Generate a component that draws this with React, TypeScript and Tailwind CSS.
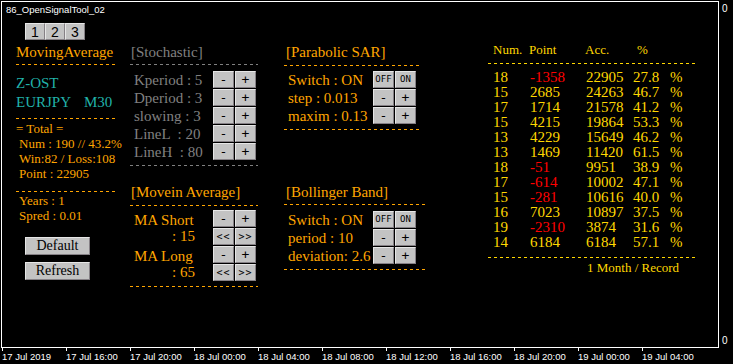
import React from "react";

// rows of the 1-month record table: num, point, acc, percent
const RECORDS: [string, string, string, string][] = [
  ["18", "-1358", "22905", "27.8"],
  ["15", "2685", "24263", "46.7"],
  ["17", "1714", "21578", "41.2"],
  ["15", "4215", "19864", "53.3"],
  ["13", "4229", "15649", "46.2"],
  ["13", "1469", "11420", "61.5"],
  ["18", "-51", "9951", "38.9"],
  ["17", "-614", "10002", "47.1"],
  ["15", "-281", "10616", "40.0"],
  ["16", "7023", "10897", "37.5"],
  ["19", "-2310", "3874", "31.6"],
  ["14", "6184", "6184", "57.1"],
];

const AXIS = [
  "17 Jul 2019",
  "17 Jul 16:00",
  "17 Jul 20:00",
  "18 Jul 00:00",
  "18 Jul 04:00",
  "18 Jul 08:00",
  "18 Jul 12:00",
  "18 Jul 16:00",
  "18 Jul 20:00",
  "19 Jul 00:00",
  "19 Jul 04:00",
];

const Dash: React.FC<{ className: string }> = ({ className }) => (
  <div className={`h-px shrink-0 ${className}`} />
);

const ORANGE_DASH =
  "bg-[repeating-linear-gradient(90deg,#ffa500_0px,#ffa500_3px,transparent_3px,transparent_6px)]";
const GRAY_DASH =
  "bg-[repeating-linear-gradient(90deg,#808080_0px,#808080_3px,transparent_3px,transparent_6px)]";
const GOLD_DASH =
  "bg-[repeating-linear-gradient(90deg,#ffd700_0px,#ffd700_3px,transparent_3px,transparent_6px)]";

const Btn: React.FC<{ label: string; size?: "sm" | "md" }> = ({ label, size }) => (
  <div
    className={`w-[21px] h-[17px] flex items-center justify-center bg-[#c3c3c3] border border-t-[#e6e6e6] border-l-[#e6e6e6] border-r-[#858085] border-b-[#858085] text-black font-['DejaVu_Sans_Mono',monospace] leading-none ${
      size === "sm" ? "text-[9px]" : size === "md" ? "text-[10px] tracking-[1px]" : "text-[13px]"
    }`}
  >
    {label}
  </div>
);

const BtnPair: React.FC<{ a: string; b: string; size?: "sm" | "md" }> = ({ a, b, size }) => (
  <div className="flex gap-px">
    <Btn label={a} size={size} />
    <Btn label={b} size={size} />
  </div>
);

const ParamRow: React.FC<{
  text: string;
  textWidth: string;
  a: string;
  b: string;
  color: string;
  size?: "sm" | "md";
}> = ({ text, textWidth, a, b, color, size }) => (
  <div className="flex h-[18px]">
    <div className={`${textWidth} ${color} pl-[4px] text-[15px] leading-[18px] whitespace-pre`}>
      {text}
    </div>
    <BtnPair a={a} b={b} size={size} />
  </div>
);

const App: React.FC = () => {
  return (
    <div className="w-[733px] h-[364px] bg-black overflow-hidden select-none font-['Liberation_Serif',serif]">
      <div className="flex pt-[1px] pl-[1px]">
        {/* chart window */}
        <div className="w-[718px] h-[347px] border border-white flex flex-col">
          <div className="mt-[2px] pl-[4px] h-[12px] text-[9.5px] leading-[12px] text-white font-['Liberation_Sans',sans-serif]">
            86_OpenSignalTool_02
          </div>

          {/* tabs */}
          <div className="mt-[7px] ml-[23px] flex h-[17px]">
            {["1", "2", "3"].map((t) => (
              <div
                key={t}
                className="w-[20px] h-[17px] flex items-center justify-center bg-[#c3c3c3] border border-t-[#e6e6e6] border-l-[#e6e6e6] border-r-[#858085] border-b-[#858085] text-black text-[14px] leading-none font-['Liberation_Sans',sans-serif]"
              >
                {t}
              </div>
            ))}
          </div>

          <div className="mt-[2px] flex">
            {/* left summary */}
            <div className="ml-[14px] w-[114px] pt-[1px] flex flex-col text-[#ffa500]">
              <div className="text-[15px] leading-[18px]">MovingAverage</div>
              <Dash className={`mt-[3px] w-[100px] ${ORANGE_DASH}`} />
              <div className="mt-[9px] text-[15px] leading-[18px] text-[#20b2aa]">Z-OST</div>
              <div className="mt-[1px] text-[15px] leading-[18px] text-[#20b2aa]">
                EURJPY<span className="ml-[13px]">M30</span>
              </div>
              <Dash className={`mt-[7px] w-[100px] ${ORANGE_DASH}`} />
              <div className="mt-[2px] text-[13px] leading-[15px]">= Total =</div>
              <div className="pl-[3px] text-[13px] leading-[15px]">Num : 190 // 43.2%</div>
              <div className="pl-[3px] text-[13px] leading-[15px]">Win:82 / Loss:108</div>
              <div className="pl-[3px] text-[13px] leading-[15px]">Point : 22905</div>
              <Dash className={`mt-[10px] w-[100px] ${ORANGE_DASH}`} />
              <div className="mt-[1px] pl-[3px] text-[13px] leading-[15px]">Years : 1</div>
              <div className="pl-[3px] text-[13px] leading-[15px]">Spred : 0.01</div>
              <div className="mt-[14px] ml-[9px] w-[65px] h-[18px] flex items-center justify-center bg-[#c3c3c3] border border-t-[#e6e6e6] border-l-[#e6e6e6] border-r-[#858085] border-b-[#858085] text-black text-[14px] leading-none">
                Default
              </div>
              <div className="mt-[7px] ml-[9px] w-[65px] h-[18px] flex items-center justify-center bg-[#c3c3c3] border border-t-[#e6e6e6] border-l-[#e6e6e6] border-r-[#858085] border-b-[#858085] text-black text-[14px] leading-none">
                Refresh
              </div>
            </div>

            {/* stochastic + moving average */}
            <div className="w-[128px] pt-[1px] flex flex-col">
              <div className="pl-[1px] text-[15px] leading-[18px] text-[#808080]">[Stochastic]</div>
              <Dash className={`mt-[3px] w-[128px] ${GRAY_DASH}`} />
              <div className="mt-[6px] flex flex-col">
                <ParamRow text="Kperiod : 5" textWidth="w-[83px]" a="-" b="+" color="text-[#808080]" />
                <ParamRow text="Dperiod : 3" textWidth="w-[83px]" a="-" b="+" color="text-[#808080]" />
                <ParamRow text="slowing : 3" textWidth="w-[83px]" a="-" b="+" color="text-[#808080]" />
                <ParamRow text="LineL  : 20" textWidth="w-[83px]" a="-" b="+" color="text-[#808080]" />
                <ParamRow text="LineH  : 80" textWidth="w-[83px]" a="-" b="+" color="text-[#808080]" />
              </div>
              <Dash className={`mt-[4px] w-[128px] ${GRAY_DASH}`} />

              <div className="mt-[17px] pl-[1px] text-[15px] leading-[18px] text-[#ffa500]">
                [Movein Average]
              </div>
              <Dash className={`mt-[4px] w-[128px] ${ORANGE_DASH}`} />
              <div className="mt-[4px] flex">
                <div className="w-[83px] pl-[4px] pt-[2px] text-[15px] leading-[16px] text-[#ffa500]">
                  <div className="w-[61px]">
                    <div>MA Short</div>
                    <div className="text-right">: 15</div>
                    <div className="mt-[4px]">MA Long</div>
                    <div className="text-right">: 65</div>
                  </div>
                </div>
                <div className="flex flex-col gap-px">
                  <BtnPair a="-" b="+" />
                  <BtnPair a="<<" b=">>" size="md" />
                  <BtnPair a="-" b="+" />
                  <BtnPair a="<<" b=">>" size="md" />
                </div>
              </div>
              <Dash className={`mt-[5px] w-[128px] ${ORANGE_DASH}`} />
            </div>

            {/* parabolic sar + bollinger */}
            <div className="ml-[26px] w-[142px] pt-[1px] flex flex-col text-[#ffa500]">
              <div className="pl-[2px] text-[15px] leading-[18px]">[Parabolic SAR]</div>
              <Dash className={`mt-[4px] w-[136px] ${ORANGE_DASH}`} />
              <div className="mt-[5px] flex flex-col">
                <ParamRow text="Switch : ON" textWidth="w-[89px]" a="OFF" b="ON" size="sm" color="text-[#ffa500]" />
                <ParamRow text="step : 0.013" textWidth="w-[89px]" a="-" b="+" color="text-[#ffa500]" />
                <ParamRow text="maxim : 0.13" textWidth="w-[89px]" a="-" b="+" color="text-[#ffa500]" />
              </div>
              <Dash className={`mt-[4px] w-[136px] ${ORANGE_DASH}`} />

              <div className="mt-[53px] pl-[2px] text-[15px] leading-[18px]">[Bollinger Band]</div>
              <Dash className={`mt-[3px] w-[142px] ${ORANGE_DASH}`} />
              <div className="mt-[6px] flex flex-col">
                <ParamRow text="Switch : ON" textWidth="w-[89px]" a="OFF" b="ON" size="sm" color="text-[#ffa500]" />
                <ParamRow text="period : 10" textWidth="w-[89px]" a="-" b="+" color="text-[#ffa500]" />
                <ParamRow text="deviation: 2.6" textWidth="w-[89px]" a="-" b="+" color="text-[#ffa500]" />
              </div>
              <Dash className={`mt-[4px] w-[142px] ${ORANGE_DASH}`} />
            </div>

            {/* record table */}
            <div className="ml-[62px] w-[207px] flex flex-col text-[#ffd700]">
              <div className="flex pl-[5px] text-[13px] leading-[15px]">
                <span className="w-[36px]">Num.</span>
                <span className="w-[56px]">Point</span>
                <span className="w-[52px]">Acc.</span>
                <span>%</span>
              </div>
              <Dash className={`mt-[6px] w-[207px] ${GOLD_DASH}`} />
              <div className="mt-[6px] flex flex-col text-[15px] leading-[15px]">
                {RECORDS.map(([num, point, acc, pct], i) => (
                  <div key={i} className="flex pl-[5px] h-[15px]">
                    <span className="w-[37px]">{num}</span>
                    <span className={`w-[56px] ${point.startsWith("-") ? "text-[#ff0000]" : ""}`}>
                      {point}
                    </span>
                    <span className="w-[47px]">{acc}</span>
                    <span className="w-[37px]">{pct}</span>
                    <span>%</span>
                  </div>
                ))}
              </div>
              <Dash className={`mt-[7px] w-[207px] ${GOLD_DASH}`} />
              <div className="mt-[2px] pl-[99px] text-[13px] leading-[15px] whitespace-nowrap">
                1 Month / Record
              </div>
            </div>
          </div>
        </div>

        {/* price scale */}
        <div className="h-[347px] pl-[3px] pt-[2px] pb-[2px] flex flex-col justify-between text-white text-[10px] leading-[11px] font-['Liberation_Sans',sans-serif]">
          <span>0</span>
          <span>0</span>
        </div>
      </div>

      {/* time scale */}
      <div className="flex pl-[2px]">
        {AXIS.map((label) => (
          <div key={label} className="w-[64px] shrink-0 flex flex-col">
            <div className="w-px h-[3px] bg-white" />
            <div className="text-white text-[9.5px] leading-[11px] whitespace-nowrap font-['Liberation_Sans',sans-serif]">
              {label}
            </div>
          </div>
        ))}
      </div>
    </div>
  );
};

export default App;
